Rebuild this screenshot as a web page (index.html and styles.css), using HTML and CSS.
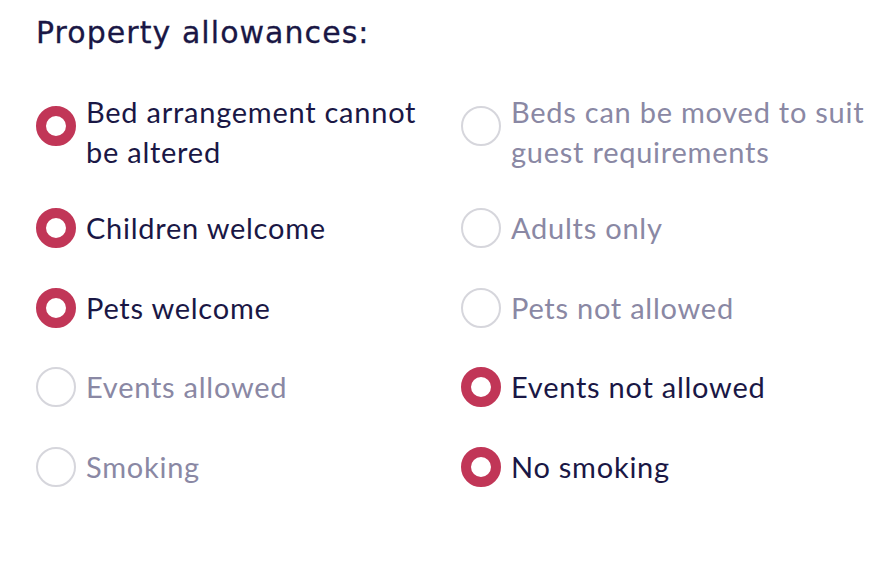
FILE: index.html
```html
<!DOCTYPE html>
<html>
<head>
<meta charset="utf-8">
<link rel="stylesheet" href="styles.css">
</head>
<body>
<section class="allowances">
  <h2 class="title">Property allowances:</h2>
  <div class="grid">
    <label class="option checked multi"><span class="radio"></span><span class="text">Bed arrangement cannot be altered</span></label>
    <label class="option multi wide"><span class="radio"></span><span class="text">Beds can be moved to suit guest requirements</span></label>
    <label class="option checked"><span class="radio"></span><span class="text">Children welcome</span></label>
    <label class="option"><span class="radio"></span><span class="text">Adults only</span></label>
    <label class="option checked"><span class="radio"></span><span class="text">Pets welcome</span></label>
    <label class="option"><span class="radio"></span><span class="text">Pets not allowed</span></label>
    <label class="option"><span class="radio"></span><span class="text">Events allowed</span></label>
    <label class="option checked"><span class="radio"></span><span class="text">Events not allowed</span></label>
    <label class="option"><span class="radio"></span><span class="text">Smoking</span></label>
    <label class="option checked"><span class="radio"></span><span class="text">No smoking</span></label>
  </div>
</section>
</body>
</html>
```
FILE: styles.css
```css
html, body {
  margin: 0;
  padding: 0;
  background: #ffffff;
}
.allowances {
  padding: 13px 0 0 36px;
}
.title {
  margin: 0;
  font-family: "DejaVu Sans", sans-serif;
  font-weight: 400;
  font-size: 30px;
  line-height: 40px;
  color: #1a1745;
  letter-spacing: 1.05px;
  -webkit-text-stroke: 0.3px #1a1745;
}
.grid {
  display: grid;
  grid-template-columns: 425px 420px;
  row-gap: 39.5px;
  margin-top: 39px;
}
.option {
  display: flex;
  align-items: center;
  gap: 10px;
  font-family: Lato, "Source Sans Pro", sans-serif;
  font-size: 29px;
  letter-spacing: 0.75px;
  line-height: 40px;
  color: #8a88a4;
}
.option.multi {
  align-items: flex-start;
  margin-bottom: -3.5px;
}
.option.multi .radio {
  margin-top: 14px;
}
.option.checked {
  color: #1a1745;
}
.radio {
  flex: none;
  width: 40px;
  height: 40px;
  box-sizing: border-box;
  border-radius: 50%;
  border: 2px solid #d6d6dc;
  background: #fff;
}
.option.checked .radio {
  border: 10px solid #c13657;
}
.text {
  max-width: 358px;
}
.option.wide .text {
  max-width: 385px;
}
```
